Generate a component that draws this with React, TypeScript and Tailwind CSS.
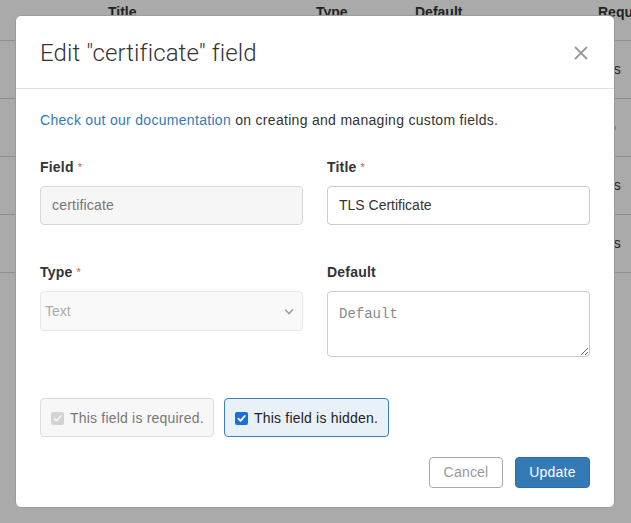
import React from "react";

function Req() {
  return <sup className="ml-[4px] text-[11px] text-[#d9534f] font-normal relative top-[-1px]">*</sup>;
}

function CheckIcon({ color }: { color: string }) {
  return (
    <svg width="9" height="9" viewBox="0 0 10 10" fill="none">
      <path d="M1.5 5.2 L4 7.7 L8.6 2.2" stroke={color} strokeWidth="2" strokeLinecap="round" strokeLinejoin="round" />
    </svg>
  );
}

export default function App() {
  const rows = ["Yes", "No", "Yes", "Yes"];
  return (
    <div className="relative w-[631px] h-[523px] overflow-hidden bg-[#aaaaaa] text-[14px] text-[#222]" style={{ fontFamily: '"Liberation Sans", Arial, sans-serif' }}>
      {/* background table */}
      <div className="flex flex-col">
        <div className="h-[41px] border-b border-[#8e8e8e] grid grid-cols-[108px_208px_99px_183px_auto] pt-[4px] font-bold text-[#222] leading-[16px]">
          <span />
          <span>Title</span>
          <span>Type</span>
          <span>Default</span>
          <span className="whitespace-nowrap">Requ</span>
        </div>
        {rows.map((r, i) => (
          <div key={i} className="h-[58px] border-b border-[#8e8e8e] grid grid-cols-[598px_auto] items-center">
            <span />
            <span className="text-[#222]">{r}</span>
          </div>
        ))}
      </div>

      {/* modal */}
      <div className="absolute left-[15px] top-[15px] w-[600px] h-[493px] bg-white rounded-[6px] border border-[#9a9a9a] flex flex-col">
        <div className="h-[73px] border-b border-[#e0e0e0] flex items-center justify-between pl-[24px] pr-[24px]">
          <h1 className="text-[24px] font-light text-[#333] tracking-[0.1px] pt-[2px]" style={{ fontFamily: 'Roboto, "Liberation Sans", sans-serif' }}>
            Edit "certificate" field
          </h1>
          <svg width="16" height="16" viewBox="0 0 16 16" className="mr-[1px] mt-[1px]">
            <path d="M2 2 L14 14 M14 2 L2 14" stroke="#9a9a9a" strokeWidth="1.8" />
          </svg>
        </div>
        <div className="flex flex-col px-[24px] pt-[21px]">
          <p className="leading-[20px] text-[#333] tracking-[0.3px]">
            <span className="text-[#337ab7]">Check out our documentation</span> on creating and managing custom fields.
          </p>
          <div className="grid grid-cols-[263px_263px] gap-x-[24px] mt-[27px]">
            <div className="flex flex-col">
              <label className="font-bold text-[#333] leading-[20px] tracking-[0.2px]">Field<Req /></label>
              <div className="mt-[9px] h-[39px] rounded-[4px] border border-[#d8d8d8] bg-[#f6f6f6] flex items-center px-[11px] text-[#777] tracking-[0.2px]">certificate</div>
            </div>
            <div className="flex flex-col">
              <label className="font-bold text-[#333] leading-[20px] tracking-[0.2px]">Title<Req /></label>
              <div className="mt-[9px] h-[39px] rounded-[4px] border border-[#cccccc] bg-white flex items-center px-[11px] text-[#333]">TLS Certificate</div>
            </div>
            <div className="flex flex-col mt-[37px]">
              <label className="font-bold text-[#333] leading-[20px] tracking-[0.2px]">Type<Req /></label>
              <div className="mt-[9px] h-[40px] rounded-[4px] border border-[#e6e6e6] bg-[#f9f9f9] flex items-center justify-between pl-[4px] pr-[8px] text-[#aaaaaa]">
                <span>Text</span>
                <svg width="10" height="7" viewBox="0 0 10 7">
                  <path d="M1 1.5 L5 5.5 L9 1.5" stroke="#a0a0a0" strokeWidth="1.6" fill="none" />
                </svg>
              </div>
            </div>
            <div className="flex flex-col mt-[37px]">
              <label className="font-bold text-[#333] leading-[20px] tracking-[0.2px]">Default</label>
              <textarea
                placeholder="Default"
                className="mt-[9px] h-[66px] rounded-[4px] border border-[#cccccc] bg-white px-[11px] pt-[14px] text-[14px] leading-[16px] text-[#333] placeholder:text-[#8a8a8a] outline-none resize-y"
                style={{ fontFamily: '"Liberation Mono", monospace' }}
              />
            </div>
          </div>
          <div className="flex gap-x-[10px] mt-[41px]">
            <div className="h-[39px] w-[174px] rounded-[4px] border border-[#dddddd] bg-[#f7f7f7] flex items-center pl-[10px] pt-[2px] text-[#777] tracking-[0.2px]">
              <span className="w-[13px] h-[13px] rounded-[2px] bg-[#d3d3d3] flex items-center justify-center mr-[6px]">
                <CheckIcon color="#f4f4f4" />
              </span>
              <span>This field is required.</span>
            </div>
            <div className="h-[39px] w-[165px] rounded-[4px] border border-[#3a7fc4] bg-[#e8f0f8] flex items-center pl-[10px] pt-[2px] text-[#222] tracking-[0.2px]">
              <span className="w-[13px] h-[13px] rounded-[2px] bg-[#1a6fe0] flex items-center justify-center mr-[6px]">
                <CheckIcon color="#ffffff" />
              </span>
              <span>This field is hidden.</span>
            </div>
          </div>
          <div className="flex justify-end gap-x-[12px] mt-[20px]">
            <button className="h-[31px] w-[74px] rounded-[4px] border border-[#a8a8a8] bg-white text-[#999] tracking-[0.2px]">Cancel</button>
            <button className="h-[31px] w-[75px] rounded-[4px] border border-[#2e6da4] bg-[#337ab7] text-white tracking-[0.2px]">Update</button>
          </div>
        </div>
      </div>
    </div>
  );
}
